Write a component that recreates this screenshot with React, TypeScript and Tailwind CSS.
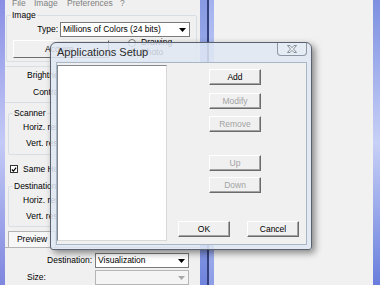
import type { ReactNode } from "react";

function Combo({ text, disabled }: { text?: string; disabled?: boolean }) {
  return (
    <div
      className={`flex h-[15px] w-full items-center border ${
        disabled ? "border-[#b5b5b5] bg-[#f4f4f4]" : "border-[#7a7a7a] bg-white"
      }`}
    >
      <span className="flex-1 pl-[2px] leading-none">{text}</span>
      <span className="flex h-full w-[13px] items-center justify-center">
        <svg width="7" height="4" viewBox="0 0 7 4">
          <polygon points="0,0 7,0 3.5,4" fill={disabled ? "#a8a8a8" : "#000"} />
        </svg>
      </span>
    </div>
  );
}

function Btn({
  label,
  disabled,
  className = "",
}: {
  label: string;
  disabled?: boolean;
  className?: string;
}) {
  return (
    <button
      type="button"
      className={`flex h-[16px] w-[52px] shrink-0 items-center justify-center border border-t-white border-l-white border-b-[#6b6b6b] border-r-[#6b6b6b] bg-[#f0f0f0] leading-none shadow-[inset_-1px_-1px_0_#a3a3a3] ${
        disabled ? "text-[#a3a3a3]" : "text-black"
      } ${className}`}
    >
      {label}
    </button>
  );
}

function Group({ title, children, className = "" }: { title: string; children: ReactNode; className?: string }) {
  return (
    <fieldset className={`rounded-[2px] border border-[#d5dfe5] ${className}`}>
      <legend className="ml-[4px] px-[1px] leading-[11px]">{title}</legend>
      {children}
    </fieldset>
  );
}

function BackWindow() {
  return (
    <div className="flex w-[200px] shrink-0">
      <div className="w-[5px] bg-gradient-to-b from-[#8a8fe4] via-[#c4caf6] to-[#7f86de]" />
      <div className="flex flex-1 flex-col bg-[#f0f0f0] text-black">
        {/* menu */}
        <div className="-mt-[2px] flex h-[11px] items-center pl-[7px] text-[#808080]">
          <span className="w-[22px]">File</span>
          <span className="w-[33px]">Image</span>
          <span className="w-[53px]">Preferences</span>
          <span>?</span>
        </div>

        <Group title="Image" className="mt-[1px] ml-[1px] mr-[3px] pb-[3px]">
          <div className="mt-[1px] flex h-[15px] items-center">
            <span className="w-[53px] pr-[2px] text-right">Type:</span>
            <div className="w-[130px]">
              <Combo text="Millions of Colors (24 bits)" />
            </div>
          </div>
          <div className="mt-[3px] flex h-[18px]">
            <button
              type="button"
              className="ml-[6px] flex h-[18px] w-[96px] shrink-0 items-center justify-start border border-t-white border-l-white border-b-[#6b6b6b] border-r-[#6b6b6b] bg-[#f0f0f0] pl-[31px] leading-none"
            >
              Acquire
            </button>
            <div className="-mt-[2px] ml-[19px] flex flex-col">
              <div className="flex h-[9px] items-center gap-[5px]">
                <span className="h-[8px] w-[8px] rounded-full border border-[#777] bg-white" />
                <span>Drawing</span>
              </div>
              <div className="mt-[1px] flex h-[9px] items-center gap-[5px]">
                <span className="h-[8px] w-[8px] rounded-full border border-[#777] bg-white" />
                <span>Photo</span>
              </div>
            </div>
          </div>
        </Group>

        <div className="mt-[4px] border-y border-[#d5dfe5] pb-[1px]">
          <div className="flex h-[16px] items-center pl-[22px]">Brightness:</div>
          <div className="flex h-[18px] items-center pl-[28px]">Contrast:</div>
        </div>

        <Group title="Scanner" className="mt-[5px] ml-[3px] mr-[3px] pb-[3px]">
          <div className="flex h-[16px] items-center pl-[14px]">Horiz. resolution:</div>
          <div className="flex h-[16px] items-center pl-[17px]">Vert. resolution:</div>
        </Group>

        <div className="mt-[8px] flex h-[14px] items-center pl-[5px]">
          <span className="flex h-[8px] w-[8px] items-center justify-center border border-[#333] bg-white">
            <svg width="7" height="7" viewBox="0 0 7 7">
              <path d="M1 3.5 L2.8 5.4 L6 1.4" stroke="#000" strokeWidth="1.4" fill="none" />
            </svg>
          </span>
          <span className="ml-[5px]">Same Horiz. and Vert. resolution</span>
        </div>

        <Group title="Destination" className="mt-[5px] ml-[3px] mr-[3px] pb-[2px]">
          <div className="flex h-[18px] items-center pl-[14px]">Horiz. resolution:</div>
          <div className="flex h-[14px] items-center pl-[17px]">Vert. resolution:</div>
        </Group>

        <div className="mt-[4px] flex h-[20px] pl-[3px]">
          <div className="flex w-[48px] items-center justify-center border border-b-0 border-[#b4b4b4] bg-[#f7f7f7]">
            Preview
          </div>
        </div>
        <div className="border-t border-[#b4b4b4]">
          <div className="mt-[5px] flex h-[15px] items-center">
            <span className="w-[88px] pr-[1px] text-right">Destination:</span>
            <div className="ml-[2px] w-[94px]">
              <Combo text="Visualization" />
            </div>
          </div>
          <div className="mt-[2px] flex h-[15px] items-center">
            <span className="w-[88px] pl-[22px]">Size:</span>
            <div className="ml-[2px] w-[94px]">
              <Combo disabled />
            </div>
          </div>
        </div>
      </div>
    </div>
  );
}

function Dialog() {
  return (
    <div className="absolute left-[50px] top-[42px] flex h-[208px] w-[262px] flex-col rounded-t-[6px] rounded-b-[3px] border border-[#59626e] bg-[#dfe8f3]/85 shadow-[3px_3px_7px_rgba(0,0,0,0.45)]">
      <div className="flex h-[19px] shrink-0 items-center">
        <span className="ml-[6px] text-[11px] leading-none text-[#2a2a2a]">Applications Setup</span>
        <button
          type="button"
          className="mr-[4px] ml-auto flex h-[13px] w-[30px] items-center justify-center self-start rounded-b-[4px] border border-t-0 border-[#8d96a3] bg-[#e6ecf3]"
        >
          <svg width="10" height="8" viewBox="0 0 10 8">
            <polygon
              points="0.5,0.5 3,0.5 5,2.6 7,0.5 9.5,0.5 6.5,4 9.5,7.5 7,7.5 5,5.4 3,7.5 0.5,7.5 3.5,4"
              fill="#eef1f4"
              stroke="#6f7884"
              strokeWidth="0.8"
            />
          </svg>
        </button>
      </div>
      <div className="mx-[4px] mb-[4px] ml-[5px] flex flex-1 border border-[#a9b6c6] bg-[#f0f0f0]">
        <div className="mt-[2px] mb-[3px] w-[110px] border border-t-[#828790] border-l-[#828790] border-b-[#d8d8d8] border-r-[#d8d8d8] bg-white" />
        <div className="flex flex-1 flex-col">
          <div className="ml-[42px] flex flex-col">
            <Btn label="Add" className="mt-[6px]" />
            <Btn label="Modify" disabled className="mt-[8px]" />
            <Btn label="Remove" disabled className="mt-[7px]" />
            <Btn label="Up" disabled className="mt-[23px]" />
            <Btn label="Down" disabled className="mt-[6px]" />
          </div>
          <div className="mt-auto mb-[7px] ml-[11px] flex">
            <Btn label="OK" />
            <Btn label="Cancel" className="ml-[17px]" />
          </div>
        </div>
      </div>
    </div>
  );
}

export default function App() {
  return (
    <div className="relative flex h-[285px] w-[380px] overflow-hidden bg-[#f0f0f0] font-['Liberation_Sans',sans-serif] text-[8.5px] text-black">
      <BackWindow />
      <div className="flex w-[14px] shrink-0">
        <div className="w-[7px] bg-gradient-to-b from-[#8799e2] via-[#b7c3f3] to-[#6f83dc]" />
        <div className="w-[2px] bg-[#33407c]" />
        <div className="w-[5px] bg-gradient-to-b from-[#a3b2ee] via-[#d5dcf8] to-[#8c9ce6]" />
      </div>
      <div className="flex-1 bg-[#f1f1f1]" />
      <div className="w-[7px] shrink-0 bg-gradient-to-b from-[#7d8fe0] via-[#c8d0f6] to-[#6a7ddb]" />
      <Dialog />
    </div>
  );
}
